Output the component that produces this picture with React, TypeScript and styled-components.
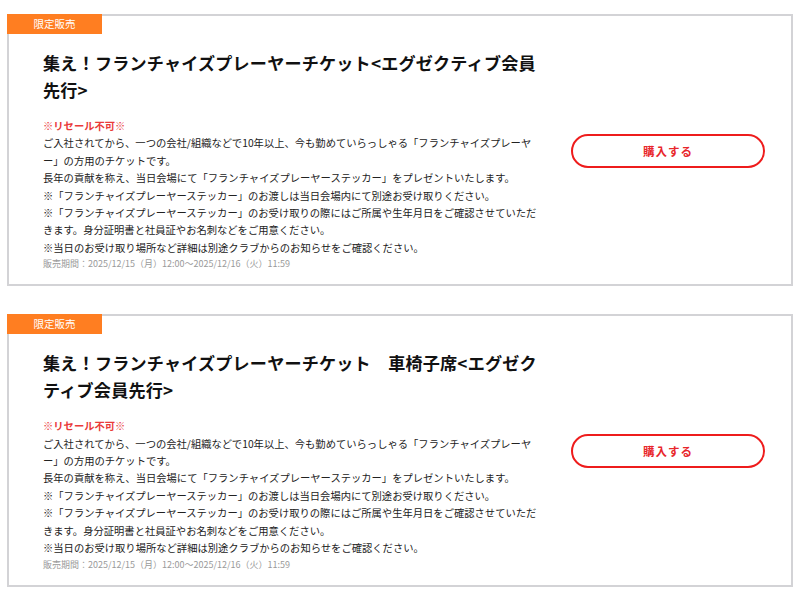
import React from 'react';
import styled, { createGlobalStyle } from 'styled-components';

interface ITicket {
	title: string;
	period: string;
}

const tickets: ITicket[] = [
	{
		title: '集え！フランチャイズプレーヤーチケット<エグゼクティブ会員先行>',
		period: '販売期間：2025/12/15（月）12:00〜2025/12/16（火）11:59',
	},
	{
		title: '集え！フランチャイズプレーヤーチケット　車椅子席<エグゼクティブ会員先行>',
		period: '販売期間：2025/12/15（月）12:00〜2025/12/16（火）11:59',
	},
];

const notes = [
	'ご入社されてから、一つの会社/組織などで10年以上、今も勤めていらっしゃる「フランチャイズプレーヤー」の方用のチケットです。',
	'長年の貢献を称え、当日会場にて「フランチャイズプレーヤーステッカー」をプレゼントいたします。',
	'※「フランチャイズプレーヤーステッカー」のお渡しは当日会場内にて別途お受け取りください。',
	'※「フランチャイズプレーヤーステッカー」のお受け取りの際にはご所属や生年月日をご確認させていただきます。身分証明書と社員証やお名刺などをご用意ください。',
	'※当日のお受け取り場所など詳細は別途クラブからのお知らせをご確認ください。',
];

const TicketCard = ({ ticket }: { ticket: ITicket }) => (
	<Card>
		<Badge>限定販売</Badge>
		<Content>
			<Title>{ticket.title}</Title>
			<Warning>※リセール不可※</Warning>
			<Body>
				{notes.map((n, i) => <p key={i}>{n}</p>)}
			</Body>
			<Period>{ticket.period}</Period>
		</Content>
		<Action>
			<BuyButton type="button">購入する</BuyButton>
		</Action>
	</Card>
);

const App = () => (
	<>
		<GlobalStyle />
		<Page>
			{tickets.map((t, i) => <TicketCard key={i} ticket={t} />)}
		</Page>
	</>
);

export default App;

const GlobalStyle = createGlobalStyle`
	body {
		margin: 0;
		background: #fff;
		font-family: "Noto Sans CJK JP", "Noto Sans", sans-serif;
	}
`;

const Page = styled('div')`
	display: flex;
	flex-direction: column;
	gap: 28px;
	padding: 14px 7px 0;
`;

const Card = styled('div')`
	position: relative;
	display: flex;
	align-items: center;
	border: 2px solid #d3d3d6;
	padding: 33px 0 13px 34px;
	background: #fff;
`;

const Badge = styled('div')`
	position: absolute;
	top: -2px;
	left: -2px;
	width: 95px;
	height: 20px;
	background: #ff7e21;
	color: #fff;
	font-size: 10.5px;
	line-height: 20px;
	text-align: center;
`;

const Content = styled('div')`
	width: 500px;
	flex: none;
`;

const Title = styled('h2')`
	margin: 0 0 14px;
	font-size: 17.1px;
	font-weight: 700;
	line-height: 27px;
	letter-spacing: 0.2px;
	color: #111;
`;

const Warning = styled('div')`
	font-size: 10.3px;
	line-height: 17.4px;
	font-weight: 700;
	color: #ea3a3a;
`;

const Body = styled('div')`
	font-size: 10.3px;
	line-height: 17.4px;
	color: #222;

	p {
		margin: 0;
	}
`;

const Period = styled('div')`
	font-size: 9px;
	line-height: 15px;
	color: #9a9a9a;
`;

const Action = styled('div')`
	flex: 1;
	display: flex;
	justify-content: flex-end;
	padding-right: 26px;
	align-self: center;
	margin-top: -19px;
`;

const BuyButton = styled('button')`
	width: 194px;
	height: 34px;
	border: 2px solid #ee1c1c;
	border-radius: 17px;
	background: #fff;
	color: #e8262b;
	font-family: inherit;
	font-size: 11.5px;
	font-weight: 700;
	letter-spacing: 1px;
	cursor: pointer;
`;
